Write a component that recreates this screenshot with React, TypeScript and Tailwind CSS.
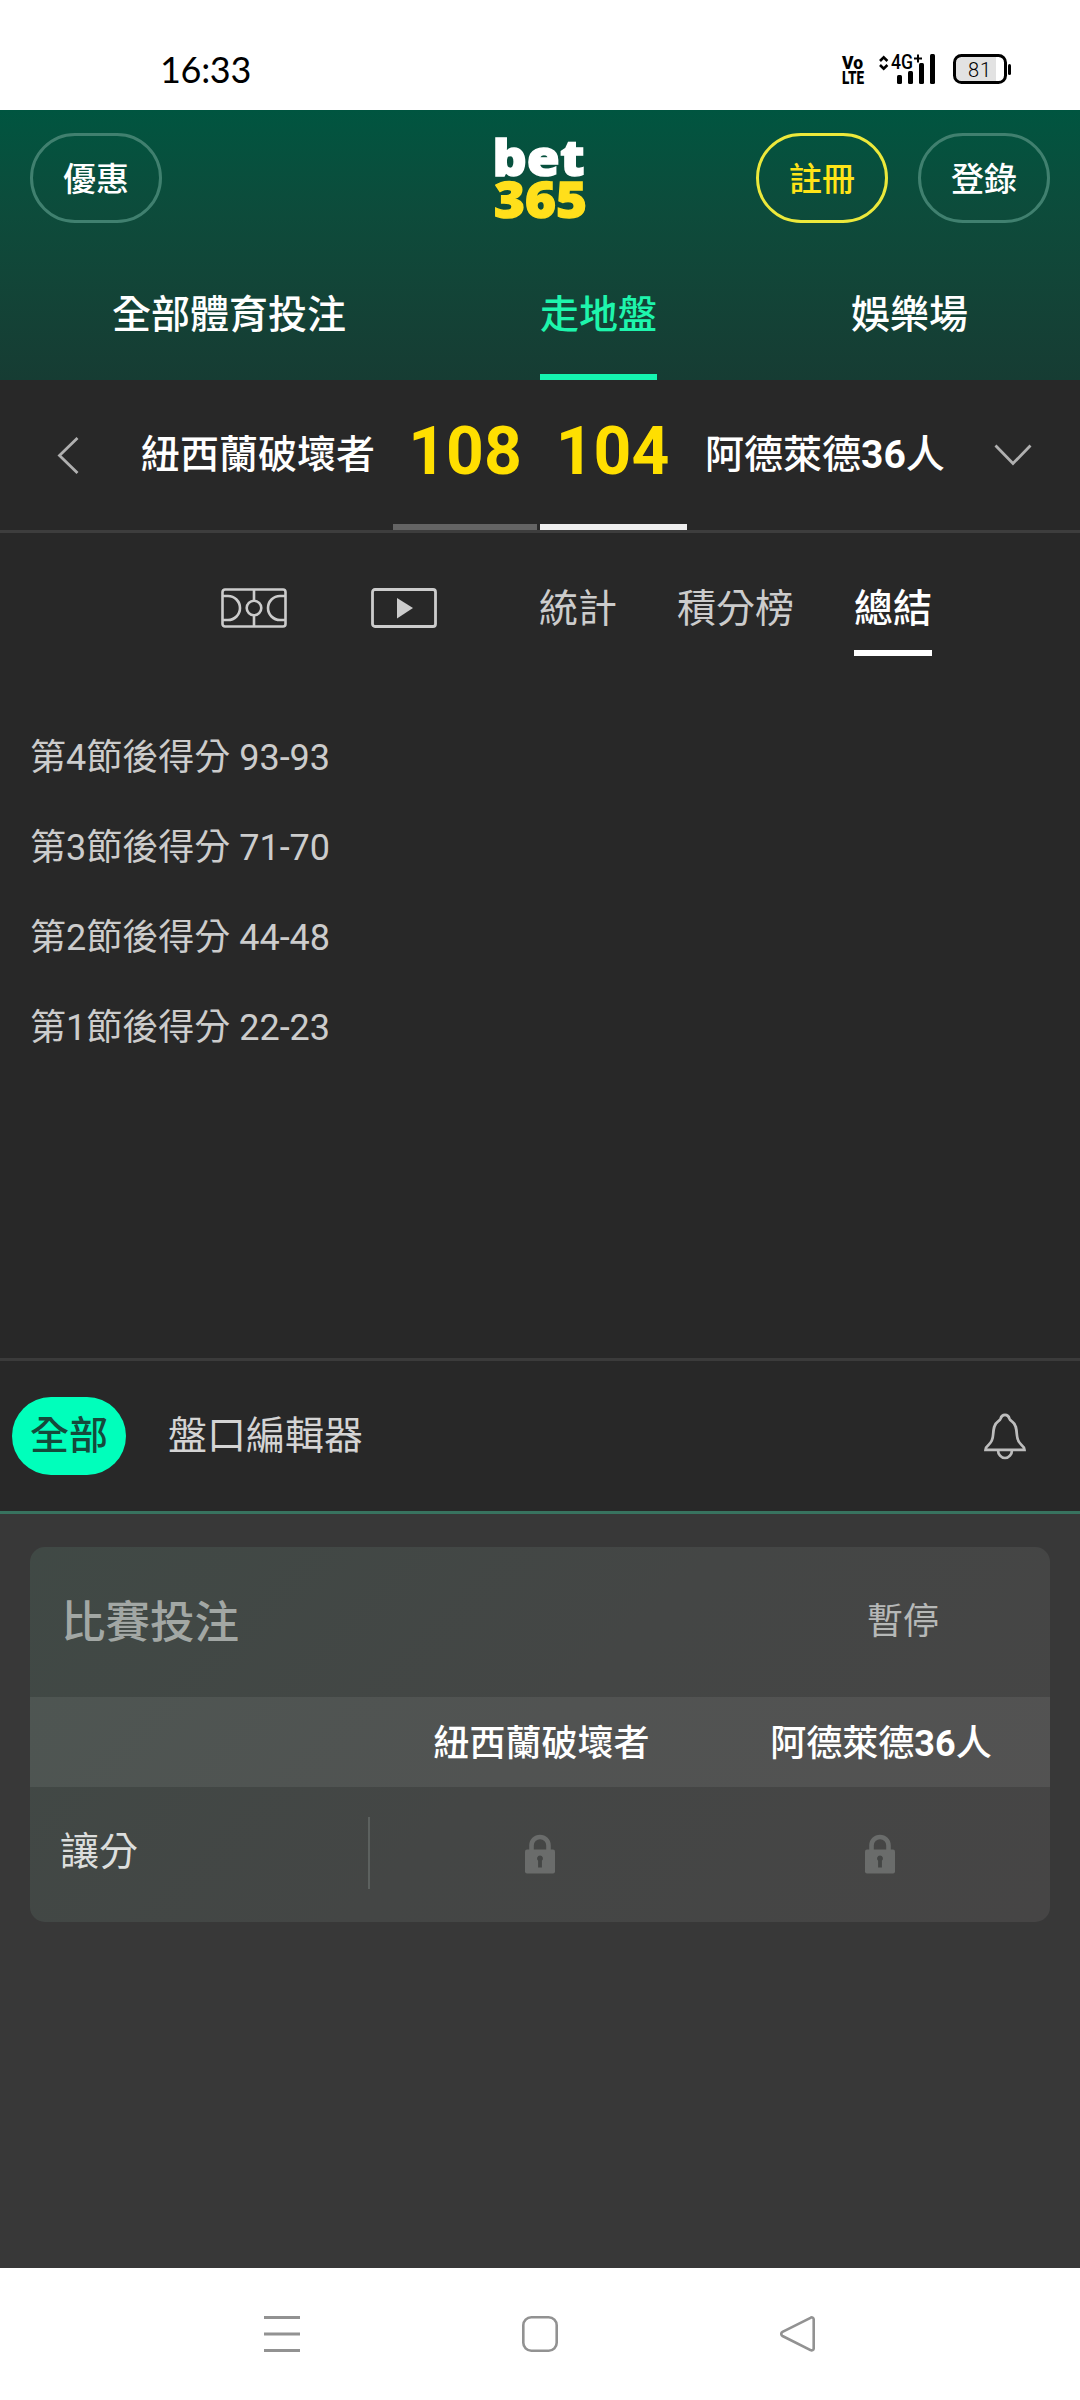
import clsx from 'clsx'

const TABS = ['全部體育投注', '走地盤', '娛樂場']

const PERIODS = [
  { period: 4, score: '93-93' },
  { period: 3, score: '71-70' },
  { period: 2, score: '44-48' },
  { period: 1, score: '22-23' },
]

function StatusBar() {
  return (
    <div className="h-[110px] bg-white flex items-center justify-between pl-[160px] pr-[67px] pt-[28px]">
      <span className="font-['Lato','Roboto',sans-serif] text-[36px] leading-none tracking-[-0.3px] text-black">16:33</span>
      <svg width="173" height="34" viewBox="840 52 173 34" className="overflow-visible" fontFamily="Roboto, sans-serif">
        <text x="842" y="68.5" fontSize="19" fontWeight="900" textLength="21" lengthAdjust="spacingAndGlyphs">Vo</text>
        <text x="842" y="84" fontSize="19" fontWeight="900" textLength="22" lengthAdjust="spacingAndGlyphs">LTE</text>
        <path d="M880 61l3.7-3.7 3.7 3.7M880 65l3.7 3.7 3.7-3.7" fill="none" stroke="#000" strokeWidth="2.6" />
        <text x="891" y="69" fontSize="20" fontWeight="500" textLength="22" lengthAdjust="spacingAndGlyphs">4G</text>
        <path d="M914 58.5h8M918 54.5v8" stroke="#000" strokeWidth="2" />
        <rect x="897" y="75" width="5" height="9" rx="1.5" />
        <rect x="908" y="71" width="5" height="13" rx="1.5" />
        <rect x="919" y="63" width="5" height="21" rx="1.5" />
        <rect x="930" y="54" width="5" height="30" rx="1.5" />
        <path d="M962 57h34v24h-34a6 6 0 0 1-6-6V63a6 6 0 0 1 6-6z" fill="#e2e2e2" />
        <rect x="954.5" y="55.5" width="51" height="27" rx="7" fill="none" stroke="#000" strokeWidth="3" />
        <path d="M1009.5 65.5v8" stroke="#000" strokeWidth="3" strokeLinecap="round" />
        <text x="968" y="76.5" fontSize="20" fontWeight="300" textLength="23">81</text>
      </svg>
    </div>
  )
}

function PillButton({ label, accent = false }: { label: string; accent?: boolean }) {
  return (
    <button
      className={clsx(
        'w-[132px] h-[90px] rounded-full border-3 pt-[4px] text-[33px] font-medium flex items-center justify-center',
        accent ? 'border-[#ece93b] text-[#ffe418]' : 'border-[#40806f] text-white',
      )}
    >
      {label}
    </button>
  )
}

function Logo() {
  return (
    <svg width="94" height="86" viewBox="493 135 94 86" className="overflow-visible" fontFamily="'Open Sans', 'Noto Sans', sans-serif" fontWeight="800">
      <text x="492.500" y="175.500" fontSize="50" fill="#fff" stroke="#fff" strokeWidth="1.4" textLength="92" lengthAdjust="spacingAndGlyphs">bet</text>
      <text x="494" y="217.500" fontSize="49" fill="#ffdf1b" stroke="#ffdf1b" strokeWidth="1.4" textLength="93" lengthAdjust="spacingAndGlyphs">365</text>
    </svg>
  )
}

function Header() {
  return (
    <header className="h-[270px] bg-linear-to-b from-[#005540] to-[#163c33] flex flex-col justify-between">
      <div className="grid grid-cols-[1fr_auto_1fr] items-start px-[30px] pt-[23px]">
        <PillButton label="優惠" />
        <div className="pt-[2px]"><Logo /></div>
        <div className="flex justify-end gap-[30px]">
          <PillButton label="註冊" accent />
          <PillButton label="登錄" />
        </div>
      </div>
      <nav className="flex justify-between px-[112px]">
        {TABS.map((tab, i) => (
          <div
            key={tab}
            className={clsx(
              'h-[130px] border-b-6 text-[39px] font-medium leading-[131px]',
              i === 1 ? 'text-[#1ef5ac] border-[#14f5b0]' : 'text-white border-transparent',
            )}
          >
            {tab}
          </div>
        ))}
      </nav>
    </header>
  )
}

function Scoreboard() {
  return (
    <div className="h-[153px] border-b-3 border-[#3d3d3d] flex items-stretch">
      <div className="w-[141px] pl-[57px] flex items-center">
        <svg width="22" height="38" viewBox="0 0 22 38" fill="none" stroke="#b0b0b0" strokeWidth="2.8">
          <path d="M20.5 2L2.5 19.5 20.5 37" />
        </svg>
      </div>
      <div className="w-[252px] text-[39px] font-medium text-white leading-[151px]">紐西蘭破壞者</div>
      <div className="w-[144px] border-b-6 border-[#646464] text-center text-[66px] font-bold text-[#ffdf00] leading-[144px]">108</div>
      <div className="w-[147px] ml-[3px] pr-[2px] border-b-6 border-[#eee] text-center text-[66px] font-bold text-[#ffdf00] leading-[144px]">104</div>
      <div className="w-[307px] pl-[18px] text-[39px] font-medium text-white leading-[151px]">
        阿德萊德<span className="font-bold">36</span>人
      </div>
      <div className="flex items-center">
        <svg width="38" height="24" viewBox="0 0 38 24" fill="none" stroke="#b0b0b0" strokeWidth="2.8">
          <path d="M1.5 2.5L19 20.5 36.5 2.5" />
        </svg>
      </div>
    </div>
  )
}

function MediaTabs() {
  return (
    <div className="h-[150px] flex items-center text-[39px] text-[#ccc] pl-[221px]">
      <svg width="66" height="40" viewBox="0 0 66 40" fill="none" stroke="#ccc" strokeWidth="2.6">
        <rect x="1.5" y="1.5" width="63" height="37" rx="2.5" />
        <path d="M33 2v10M33 28v10M2 8h5a12 12 0 0 1 0 24H2M64 8h-5a12 12 0 0 0 0 24h5" />
        <circle cx="33" cy="20" r="7.3" />
      </svg>
      <svg width="66" height="40" viewBox="0 0 66 40" fill="none" className="ml-[84px]">
        <rect x="1.5" y="1.5" width="63" height="37" rx="2.5" stroke="#ccc" strokeWidth="2.8" />
        <path d="M26 10v20.500L42 20z" fill="#ccc" />
      </svg>
      <span className="ml-[102px] pt-[2px]">統計</span>
      <span className="ml-[60px] pt-[2px]">積分榜</span>
      <span className="ml-[60px] h-[96px] leading-[98px] border-b-6 border-white text-white font-medium">總結</span>
    </div>
  )
}

function MarketBar() {
  return (
    <div className="h-[156px] border-y-3 border-t-[#3b3b3b] border-b-[#38735f] flex items-center pl-[12px] pr-[54px] text-[39px]">
      <span className="w-[114px] h-[78px] rounded-full bg-[#00ffbb] text-[#154a3b] font-medium leading-[78px] text-center">全部</span>
      <span className="ml-[42px] text-[#d4d4d4] leading-[78px]">盤口編輯器</span>
      <svg width="42" height="48" viewBox="0 0 42 48" fill="none" stroke="#bdbdbd" strokeWidth="2.7" className="ml-auto">
        <path d="M21 2.8c-2.400 0-3.800 1.500-4.300 3.600-.4 1.500-1.200 2-2.600 2.900-4.300 2.800-4.700 8-5 13.500-.3 5.200-1.400 7.200-4.200 9.700-1.900 1.600-3.200 3-3.400 5.300h39c-.2-2.300-1.500-3.700-3.400-5.300-2.800-2.500-3.900-4.500-4.200-9.700-.3-5.500-.7-10.700-5-13.500-1.400-.9-2.200-1.400-2.600-2.900-.5-2.100-1.900-3.600-4.300-3.600z" />
        <path d="M14 38a7 8 0 0 0 14 0" />
      </svg>
    </div>
  )
}

function LockIcon() {
  return (
    <svg width="30" height="40" viewBox="0 0 30 40">
      <path d="M6.5 17v-5.500a8.500 8.500 0 0 1 17 0V17" fill="none" stroke="#6a6c6b" strokeWidth="4.6" />
      <rect y="15.5" width="30" height="24" rx="2" fill="#6a6c6b" />
      <path d="M15 21.500a3 3 0 0 0-1.900 5.300v6.700h3.800v-6.700a3 3 0 0 0-1.900-5.300z" fill="#444645" />
    </svg>
  )
}

function MarketCard() {
  return (
    <div className="mx-[30px] rounded-[15px] overflow-hidden bg-linear-[135deg] from-[#404945] via-[#444645] to-[#464545]">
      <div className="h-[150px] flex items-center justify-between pl-[31px] pr-[111px]">
        <span className="pt-[2px] text-[44.5px] font-medium text-[#a2a7a4]">比賽投注</span>
        <span className="text-[36px] text-[#b6b8b7]">暫停</span>
      </div>
      <div className="h-[90px] pt-[3px] bg-white/7 grid grid-cols-[341px_341px_338px] items-center text-center text-[36px] font-medium text-white">
        <span />
        <span>紐西蘭破壞者</span>
        <span>阿德萊德<span className="font-bold">36</span>人</span>
      </div>
      <div className="h-[135px] pb-[1px] grid grid-cols-[340px_340px_340px] items-center justify-items-center">
        <div className="w-full h-[72px] mb-[2px] border-r-2 border-[#5c615f] pl-[30px] text-[39px] leading-[71px] text-[#dcdedd]">讓分</div>
        <LockIcon />
        <LockIcon />
      </div>
    </div>
  )
}

function SystemNav() {
  return (
    <div className="h-[132px] bg-white flex items-start justify-between px-[264px] pt-[48px]">
      <svg width="36" height="36" viewBox="0 0 36 36" stroke="#929292" strokeWidth="3">
        <path d="M0 1.5h36M0 18h36M0 34.5h36" />
      </svg>
      <svg width="36" height="36" viewBox="0 0 36 36" fill="none" stroke="#929292" strokeWidth="2.6">
        <rect x="1.3" y="1.3" width="33.4" height="33.4" rx="8" />
      </svg>
      <svg width="36" height="36" viewBox="0 0 36 36" fill="none" stroke="#929292" strokeWidth="2.6">
        <path d="M30.5 1.8L2.5 15.8a2.400 2.400 0 0 0 0 4.200L30.500 34a2 2 0 0 0 3.200-1.700V3.500a2 2 0 0 0-3.200-1.700z" />
      </svg>
    </div>
  )
}

export default function App() {
  return (
    <div className="w-[1080px] h-[2400px] bg-[#383838] flex flex-col font-['Roboto','Noto_Sans_CJK_TC',sans-serif]" lang="zh-Hant">
      <StatusBar />
      <Header />
      <main className="bg-[#282828]">
        <Scoreboard />
        <MediaTabs />
        <ul className="h-[675px] pt-[30px] pl-[30px] text-[36px] leading-[91px] text-[#ccc]">
          {PERIODS.map(({ period, score }) => (
            <li key={period} className="h-[90px]">{`第${period}節後得分 ${score}`}</li>
          ))}
        </ul>
        <MarketBar />
      </main>
      <section className="grow pt-[33px]">
        <MarketCard />
      </section>
      <SystemNav />
    </div>
  )
}
